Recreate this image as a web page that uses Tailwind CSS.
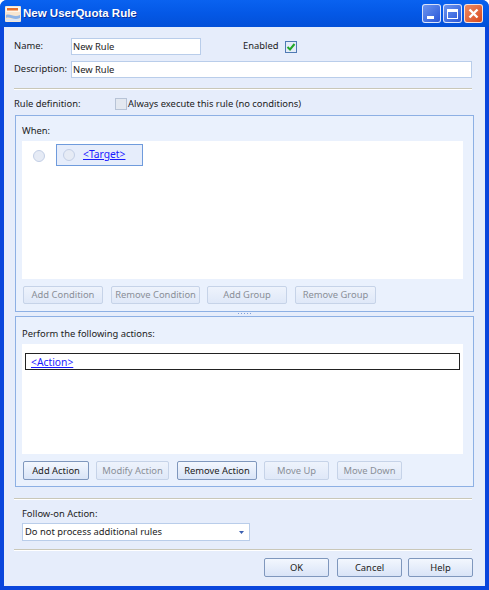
<!DOCTYPE html>
<html lang="en">
  <head>
    <meta charset="UTF-8" />
    <title>New UserQuota Rule</title>
    <script src="https://cdn.jsdelivr.net/npm/@tailwindcss/browser@4"></script>
  </head>
  <body class="w-[489px] h-[590px] overflow-hidden bg-white font-['Noto_Sans',sans-serif] text-[9.4px] text-[#1c1c1c]">
    <div class="w-[489px] h-[590px] flex flex-col rounded-t-[7px] overflow-hidden bg-[#0a46dc]">
      <!-- title bar -->
      <div class="h-[27px] shrink-0 flex items-center pl-[5px] pr-[6px] bg-gradient-to-b from-[#0a62f0] via-[#0458e6] to-[#0350d8]">
        <svg width="16" height="16" viewBox="0 0 16 16" class="shrink-0">
          <rect x="0" y="0" width="16" height="16" rx="1" fill="#f8e6d0" />
          <rect x="1" y="1" width="14" height="5" fill="#fdf6ec" />
          <rect x="2" y="2" width="11" height="2.5" fill="#e8702c" />
          <path d="M1 9 C5 7 9 12 15 9 V12 C9 15 5 10 1 12 Z" fill="#8fb4e6" />
          <rect x="1" y="13" width="14" height="2" fill="#dbe6f6" />
        </svg>
        <span class="ml-[2px] font-['Liberation_Sans',sans-serif] font-bold text-[11.5px] text-white [text-shadow:1px_1px_0_#0a2f9c]">New UserQuota Rule</span>
        <div class="ml-auto flex gap-[2px]">
          <div class="w-[19px] h-[19px] rounded-[3px] border border-white/80 bg-gradient-to-br from-[#6d94ee] to-[#2a55d8] flex items-end pl-[4px] pb-[3px]">
            <div class="w-[7px] h-[3px] bg-white"></div>
          </div>
          <div class="w-[19px] h-[19px] rounded-[3px] border border-white/80 bg-gradient-to-br from-[#6d94ee] to-[#2a55d8] flex items-center justify-center">
            <div class="w-[11px] h-[10px] border border-white border-t-[3px]"></div>
          </div>
          <div class="w-[19px] h-[19px] rounded-[3px] border border-white/80 bg-gradient-to-br from-[#ee8a62] to-[#d8481a] flex items-center justify-center">
            <svg width="11" height="11" viewBox="0 0 11 11"><path d="M1.5 1.5 L9.5 9.5 M9.5 1.5 L1.5 9.5" stroke="#fff" stroke-width="2.4" /></svg>
          </div>
        </div>
      </div>

      <!-- client area -->
      <div class="mx-[4px] mb-[4px] flex-1 bg-[#e6edfb] pl-[10px] pr-[12px] flex flex-col">
        <!-- name row -->
        <div class="mt-[11px] h-[17px] flex items-center">
          <span class="w-[57px]">Name:</span>
          <div class="w-[130px] h-[17px] bg-white border border-[#b9cdea] pl-[1px] leading-[15px]">New Rule</div>
          <span class="ml-[42px] w-[42px]">Enabled</span>
          <div class="w-[12px] h-[12px] border border-[#4f7ab4] bg-[#e4ecf8] flex items-center justify-center">
            <svg width="10" height="10" viewBox="0 0 10 10"><path d="M1.5 5 L4 7.5 L8.5 2" fill="none" stroke="#22a828" stroke-width="2" /></svg>
          </div>
        </div>
        <!-- description row -->
        <div class="mt-[6px] h-[17px] flex items-center">
          <span class="w-[57px]">Description:</span>
          <div class="w-[401px] h-[17px] bg-white border border-[#b9cdea] pl-[1px] leading-[15px]">New Rule</div>
        </div>
        <div class="mt-[10px] h-[2px] w-[458px] bg-[#c9c7b8] border-b border-white"></div>
        <!-- rule definition -->
        <div class="mt-[8px] h-[12px] flex items-center">
          <span class="w-[101px]">Rule definition:</span>
          <div class="w-[12px] h-[12px] border border-[#b7c3d6] bg-[#e3e8f0]"></div>
          <span class="ml-[1px]">Always execute this rule (no conditions)</span>
        </div>

        <!-- when panel -->
        <div class="mt-[5px] ml-[1px] w-[459px] h-[197px] border border-[#8db0e4] bg-[#eaf1fd] pl-[6px] flex flex-col">
          <div class="h-[25px] pt-[7px] leading-[15px]">When:</div>
          <div class="w-[441px] h-[138px] bg-white pt-[3px] pl-[11px] flex items-start">
            <div class="mt-[6px] w-[12px] h-[12px] rounded-full border border-[#c3cfe6] bg-[#e6ebf5]"></div>
            <div class="ml-[11px] w-[87px] h-[22px] border border-[#6f9bdc] bg-[#e6edfb] flex items-center pl-[6px]">
              <div class="w-[12px] h-[12px] rounded-full border border-[#c3cfe6] bg-[#e6ebf5]"></div>
              <a class="ml-[8px] text-[10.3px] text-[#1a1aff] underline">&lt;Target&gt;</a>
            </div>
          </div>
          <div class="mt-[7px] flex">
            <div class="ml-[1px] w-[80px] h-[18px] rounded-[2px] border border-[#c6d3e8] bg-gradient-to-b from-[#eef3fc] to-[#dfe8f8] text-center leading-[16px] text-[#8a8f98]">Add Condition</div>
            <div class="ml-[8px] w-[89px] h-[18px] rounded-[2px] border border-[#c6d3e8] bg-gradient-to-b from-[#eef3fc] to-[#dfe8f8] text-center leading-[16px] text-[#8a8f98]">Remove Condition</div>
            <div class="ml-[7px] w-[80px] h-[18px] rounded-[2px] border border-[#c6d3e8] bg-gradient-to-b from-[#eef3fc] to-[#dfe8f8] text-center leading-[16px] text-[#8a8f98]">Add Group</div>
            <div class="ml-[8px] w-[81px] h-[18px] rounded-[2px] border border-[#c6d3e8] bg-gradient-to-b from-[#eef3fc] to-[#dfe8f8] text-center leading-[16px] text-[#8a8f98]">Remove Group</div>
          </div>
        </div>

        <!-- splitter -->
        <div class="h-[4px] ml-[1px] w-[459px] flex justify-center items-start gap-[2px] pt-[1px]">
          <div class="w-[1px] h-[1px] bg-[#7f9fd8]"></div>
          <div class="w-[1px] h-[1px] bg-[#7f9fd8]"></div>
          <div class="w-[1px] h-[1px] bg-[#7f9fd8]"></div>
          <div class="w-[1px] h-[1px] bg-[#7f9fd8]"></div>
          <div class="w-[1px] h-[1px] bg-[#7f9fd8]"></div>
        </div>

        <!-- actions panel -->
        <div class="ml-[1px] w-[459px] h-[171px] border border-[#8db0e4] bg-[#eaf1fd] pl-[6px] flex flex-col">
          <div class="h-[27px] pt-[9px] leading-[15px]">Perform the following actions:</div>
          <div class="w-[441px] h-[110px] bg-white pt-[9px] pl-[3px]">
            <div class="w-[435px] h-[17px] border border-[#222] pl-[5px] leading-[16px]">
              <a class="text-[10.3px] text-[#1a1aff] underline">&lt;Action&gt;</a>
            </div>
          </div>
          <div class="mt-[7px] flex">
            <div class="ml-[1px] w-[66px] h-[19px] rounded-[2px] border border-[#7f97bd] bg-gradient-to-b from-[#f3f7fe] to-[#d9e4f7] text-center leading-[17px]">Add Action</div>
            <div class="ml-[7px] w-[73px] h-[19px] rounded-[2px] border border-[#c6d3e8] bg-gradient-to-b from-[#eef3fc] to-[#dfe8f8] text-center leading-[17px] text-[#8a8f98]">Modify Action</div>
            <div class="ml-[8px] w-[80px] h-[19px] rounded-[2px] border border-[#7f97bd] bg-gradient-to-b from-[#f3f7fe] to-[#d9e4f7] text-center leading-[17px]">Remove Action</div>
            <div class="ml-[7px] w-[65px] h-[19px] rounded-[2px] border border-[#c6d3e8] bg-gradient-to-b from-[#eef3fc] to-[#dfe8f8] text-center leading-[17px] text-[#8a8f98]">Move Up</div>
            <div class="ml-[8px] w-[65px] h-[19px] rounded-[2px] border border-[#c6d3e8] bg-gradient-to-b from-[#eef3fc] to-[#dfe8f8] text-center leading-[17px] text-[#8a8f98]">Move Down</div>
          </div>
        </div>

        <div class="mt-[11px] h-[2px] w-[458px] bg-[#c9c7b8] border-b border-white"></div>
        <div class="mt-[6px] ml-[8px] h-[15px] leading-[15px]">Follow-on Action:</div>
        <div class="mt-[2px] ml-[8px] w-[228px] h-[18px] bg-white border border-[#b9cdea] pl-[2px] pr-[5px] flex items-center justify-between">
          <span>Do not process additional rules</span>
          <svg width="5" height="3" viewBox="0 0 5 3"><path d="M0 0 H5 L2.5 3 Z" fill="#3a5fb0" /></svg>
        </div>
        <div class="mt-[8px] h-[2px] w-[458px] bg-[#c9c7b8] border-b border-white"></div>
        <!-- dialog buttons -->
        <div class="mt-[7px] flex">
          <div class="ml-[250px] w-[65px] h-[19px] rounded-[2px] border border-[#7f97bd] bg-gradient-to-b from-[#f3f7fe] to-[#d9e4f7] text-center leading-[18px]">OK</div>
          <div class="ml-[8px] w-[65px] h-[19px] rounded-[2px] border border-[#7f97bd] bg-gradient-to-b from-[#f3f7fe] to-[#d9e4f7] text-center leading-[18px]">Cancel</div>
          <div class="ml-[6px] w-[65px] h-[19px] rounded-[2px] border border-[#7f97bd] bg-gradient-to-b from-[#f3f7fe] to-[#d9e4f7] text-center leading-[18px]">Help</div>
        </div>
      </div>
    </div>
  </body>
</html>
